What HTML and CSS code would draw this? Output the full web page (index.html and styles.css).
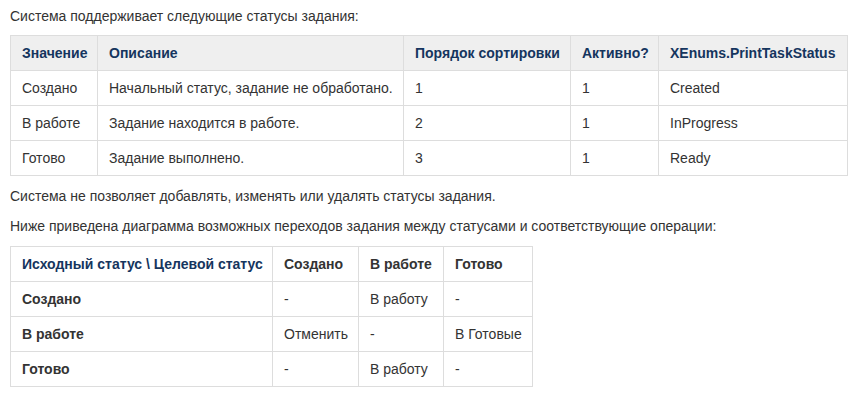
FILE: index.html
```html
<!DOCTYPE html>
<html lang="ru">
<head>
<meta charset="utf-8">
<title>Статусы задания</title>
<link rel="stylesheet" href="styles.css">
</head>
<body>
<div class="content">
  <p class="para first">Система поддерживает следующие статусы задания:</p>
  <table class="grid statuses">
    <colgroup>
      <col class="c-val"><col class="c-desc"><col class="c-order"><col class="c-active"><col class="c-enum">
    </colgroup>
    <thead>
      <tr>
        <th>Значение</th>
        <th>Описание</th>
        <th>Порядок сортировки</th>
        <th>Активно?</th>
        <th>XEnums.PrintTaskStatus</th>
      </tr>
    </thead>
    <tbody>
      <tr><td>Создано</td><td>Начальный статус, задание не обработано.</td><td>1</td><td>1</td><td>Created</td></tr>
      <tr><td>В работе</td><td>Задание находится в работе.</td><td>2</td><td>1</td><td>InProgress</td></tr>
      <tr><td>Готово</td><td>Задание выполнено.</td><td>3</td><td>1</td><td>Ready</td></tr>
    </tbody>
  </table>
  <p class="para">Система не позволяет добавлять, изменять или удалять статусы задания.</p>
  <p class="para">Ниже приведена диаграмма возможных переходов задания между статусами и соответствующие операции:</p>
  <table class="grid transitions">
    <colgroup>
      <col class="t-src"><col class="t-created"><col class="t-work"><col class="t-ready">
    </colgroup>
    <tbody>
      <tr class="head-row">
        <td class="hd blue">Исходный статус \ Целевой статус</td>
        <td class="hd">Создано</td>
        <td class="hd">В работе</td>
        <td class="hd">Готово</td>
      </tr>
      <tr><td class="hd">Создано</td><td>-</td><td>В работу</td><td>-</td></tr>
      <tr><td class="hd">В работе</td><td>Отменить</td><td>-</td><td>В Готовые</td></tr>
      <tr><td class="hd">Готово</td><td>-</td><td>В работу</td><td>-</td></tr>
    </tbody>
  </table>
</div>
</body>
</html>
```

FILE: styles.css
```css
html, body {
  margin: 0;
  padding: 0;
  background: #ffffff;
}

body {
  font-family: "Liberation Sans", Arial, sans-serif;
  font-size: 14px;
  line-height: 20px;
  color: #333333;
}

.content {
  padding: 6px 10px 0 10px;
}

.para {
  margin: 0 0 10px 0;
}

.para.first {
  margin-bottom: 9px;
}

.grid {
  border-collapse: collapse;
  table-layout: fixed;
  margin: 0 0 10px 0;
}

.grid th,
.grid td {
  border: 1px solid #dddddd;
  padding: 7px 11px;
  text-align: left;
  vertical-align: top;
  white-space: nowrap;
  font-weight: normal;
}

.statuses {
  width: 837px;
}

.statuses thead th {
  background: #efefef;
  color: #15355e;
  font-weight: bold;
}

.c-val { width: 87px; }
.c-desc { width: 306px; }
.c-order { width: 167px; }
.c-active { width: 88px; }
.c-enum { width: 189px; }

.transitions {
  width: 522px;
}

.t-src { width: 262px; }
.t-created { width: 86px; }
.t-work { width: 85px; }
.t-ready { width: 89px; }

.transitions .hd {
  font-weight: bold;
  color: #333333;
}

.transitions .hd.blue {
  color: #15355e;
}
```
